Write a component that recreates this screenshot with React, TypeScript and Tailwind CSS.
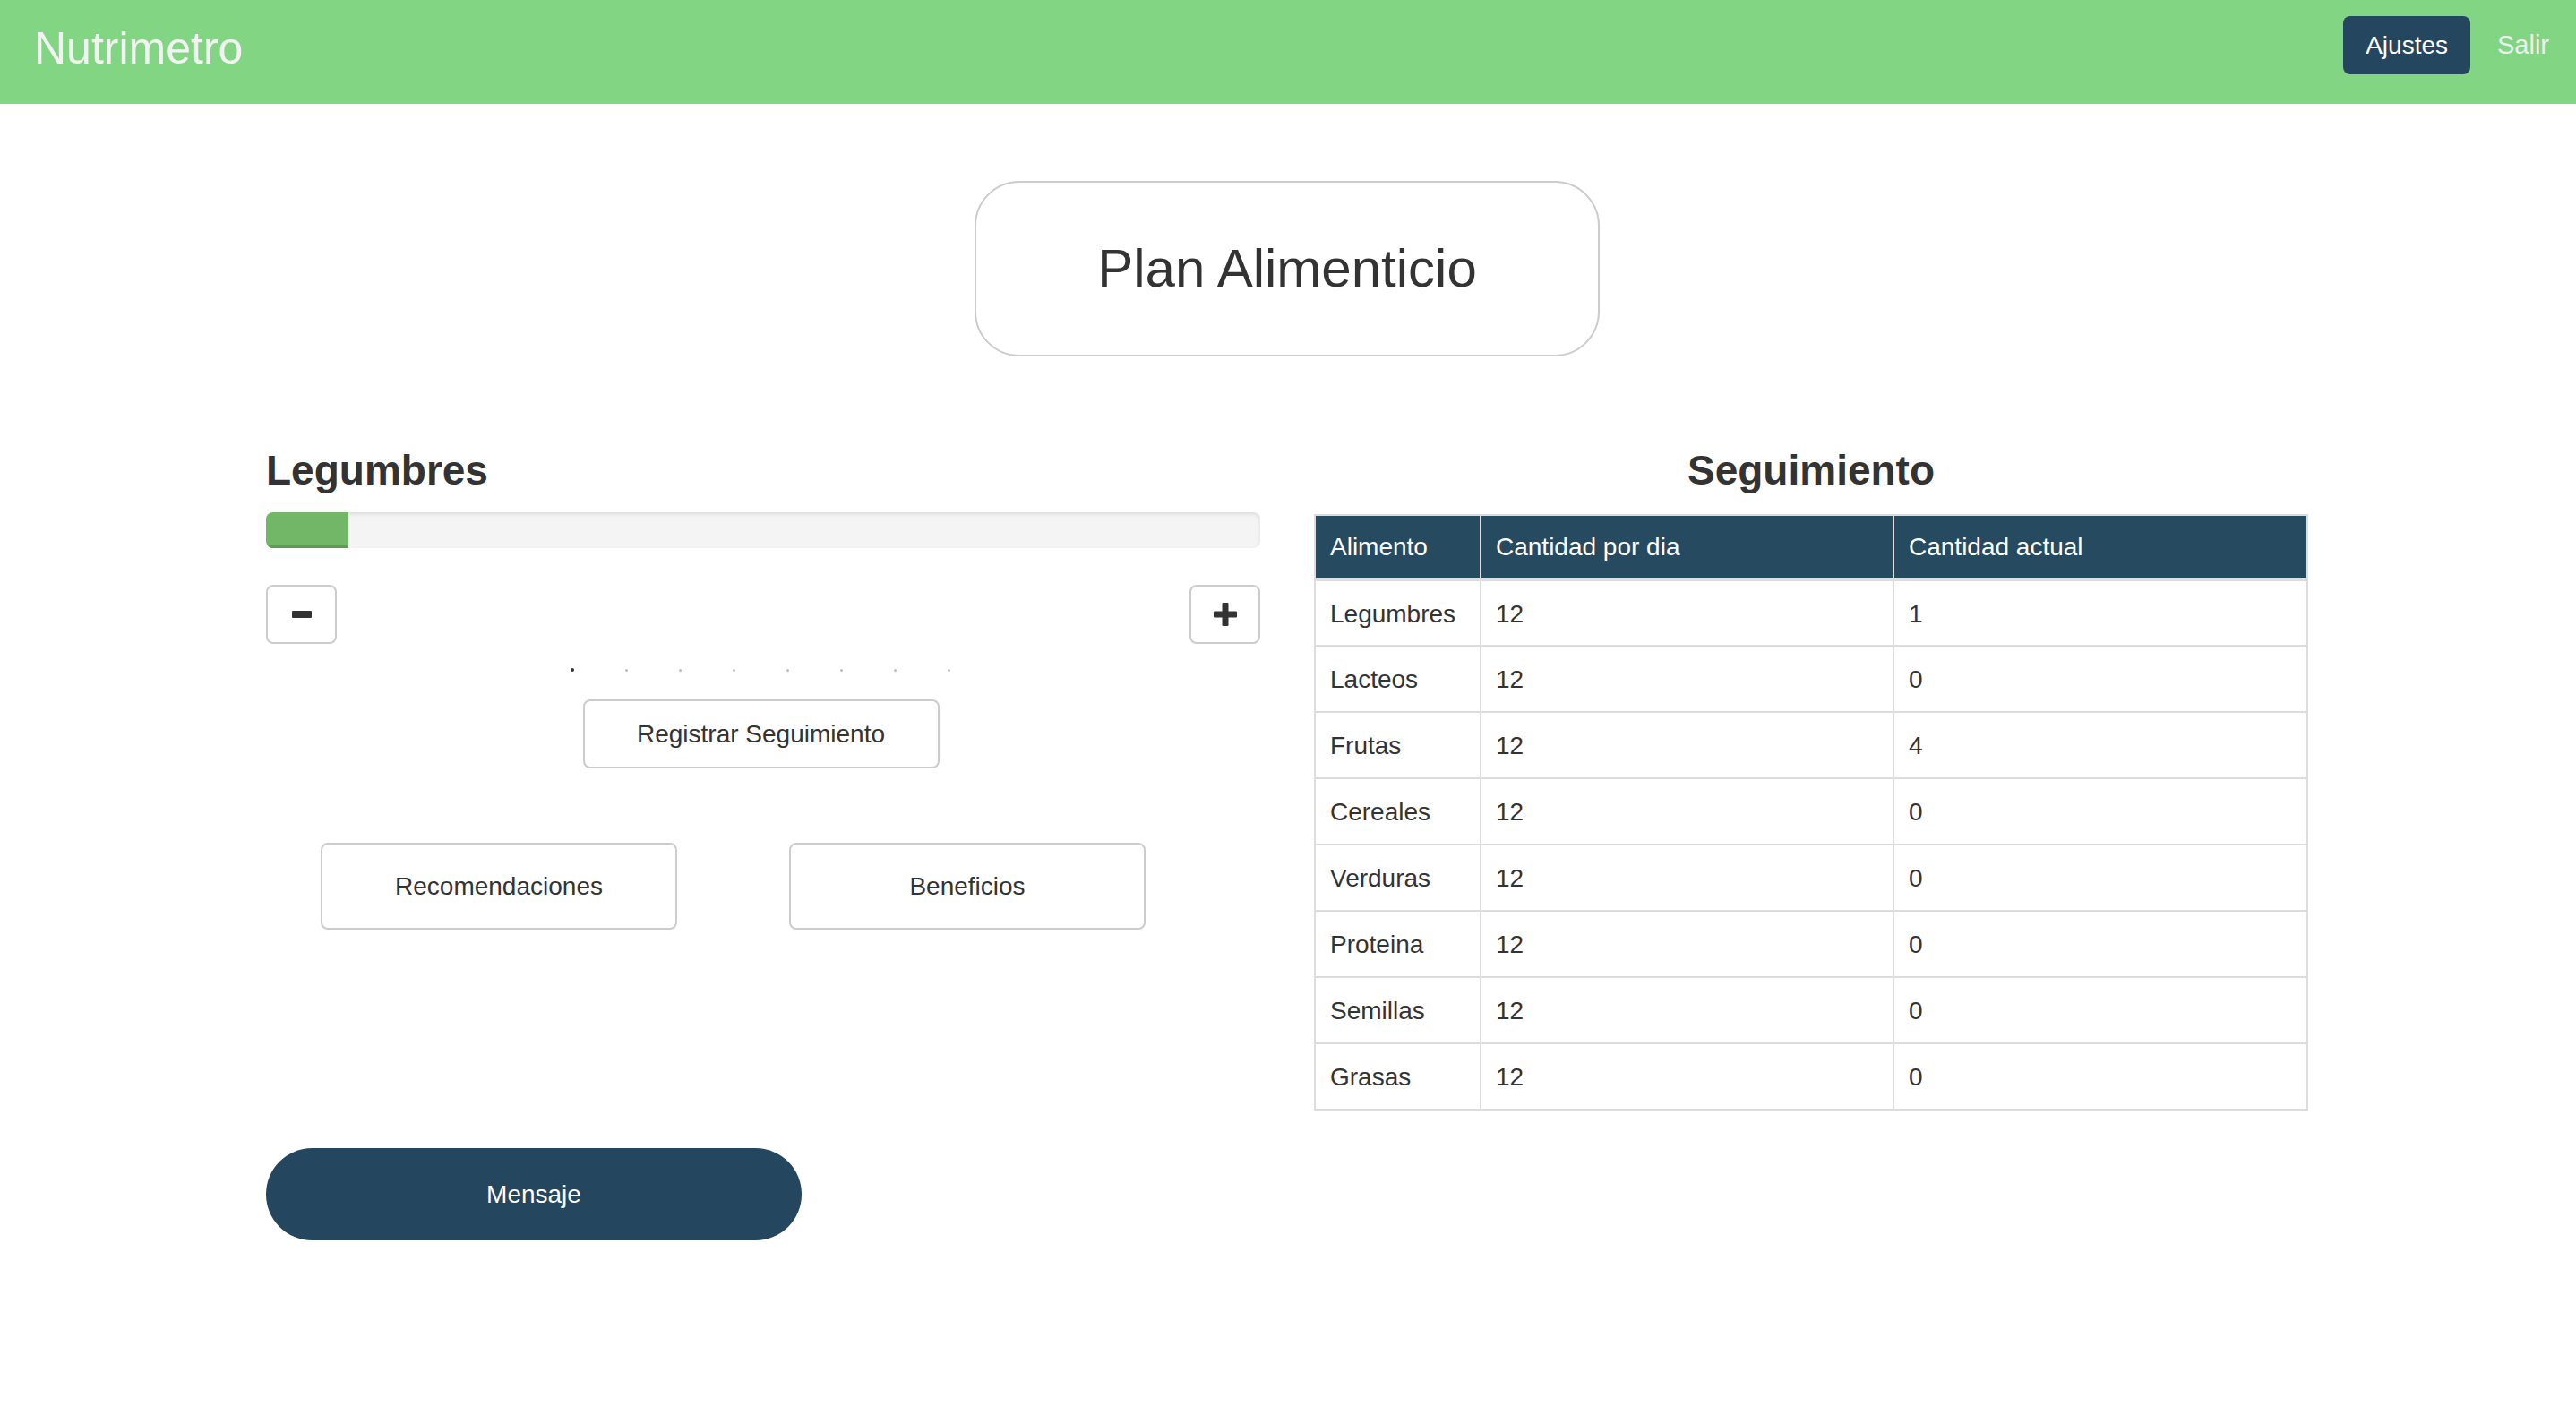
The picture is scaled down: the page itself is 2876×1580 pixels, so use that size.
import React from 'react';

const rows = [
  ['Legumbres', '12', '1'],
  ['Lacteos', '12', '0'],
  ['Frutas', '12', '4'],
  ['Cereales', '12', '0'],
  ['Verduras', '12', '0'],
  ['Proteina', '12', '0'],
  ['Semillas', '12', '0'],
  ['Grasas', '12', '0'],
];

function Navbar() {
  return (
    <nav className="h-[116px] bg-[#81d583] flex items-start justify-between pl-[38px] pr-[30px]">
      <span className="mt-[24px] text-[50px] leading-[60px] text-[#f2f2f2]">Nutrimetro</span>
      <div className="flex items-center gap-[30px] mt-[18px]">
        <button className="h-[65px] px-[25px] bg-[#24465e] rounded-[8px] text-white text-[28px]">
          Ajustes
        </button>
        <span className="text-[29px] text-[#eeeeee]">Salir</span>
      </div>
    </nav>
  );
}

function TrackerColumn() {
  return (
    <div className="flex flex-col">
      <h3 className="mt-[6px] h-[53px] text-[46px] leading-[53px] font-bold">Legumbres</h3>

      {/* barra de progreso */}
      <div className="mt-[20px] h-[40px] rounded-[8px] bg-[#f4f4f4] shadow-[inset_0_2px_4px_rgba(0,0,0,0.1)] overflow-hidden">
        <div className="h-full w-[92px] bg-[#72b667] border-b-[3px] border-[#5e9c54]"></div>
      </div>

      <div className="mt-[41px] flex justify-between">
        <button className="w-[79px] h-[66px] border-2 border-[#cccccc] rounded-[8px] bg-white flex items-center justify-center">
          <svg width="22" height="8" viewBox="0 0 22 8">
            <rect x="0" y="0" width="22" height="8" rx="1" fill="#333" />
          </svg>
        </button>
        <button className="w-[79px] h-[66px] border-2 border-[#cccccc] rounded-[8px] bg-white flex items-center justify-center">
          <svg width="26" height="26" viewBox="0 0 26 26">
            <rect x="9.5" y="0" width="7" height="26" rx="1" fill="#333" />
            <rect x="0" y="9.5" width="26" height="7" rx="1" fill="#333" />
          </svg>
        </button>
      </div>

      {/* indicadores */}
      <div className="mt-[27px] h-[4px] pr-[6px] flex justify-center items-center gap-[57px]">
        <span className="w-[4px] h-[4px] rounded-full bg-[#333]"></span>
        {[0, 1, 2, 3, 4, 5, 6].map((i) => (
          <span key={i} className="w-[3px] h-[3px] rounded-full bg-[#bbbbbb]"></span>
        ))}
      </div>

      <div className="mt-[31px] pr-[5px] flex justify-center">
        <button className="w-[398px] h-[77px] border-2 border-[#cccccc] rounded-[8px] bg-white text-[28px]">
          Registrar Seguimiento
        </button>
      </div>

      <div className="mt-[83px] flex pl-[61px] gap-[125px]">
        <button className="w-[398px] h-[97px] border-2 border-[#cccccc] rounded-[8px] bg-white text-[28px]">
          Recomendaciones
        </button>
        <button className="w-[398px] h-[97px] border-2 border-[#cccccc] rounded-[8px] bg-white text-[28px]">
          Beneficios
        </button>
      </div>

      <button className="mt-[244px] w-[598px] h-[103px] rounded-full bg-[#24465e] text-white text-[28px]">
        Mensaje
      </button>
    </div>
  );
}

function TrackingTable() {
  return (
    <div className="flex flex-col">
      <h3 className="mt-[6px] h-[53px] text-[46px] leading-[53px] font-bold text-center">Seguimiento</h3>
      <table className="mt-[22px] w-full border-collapse border-2 border-[#dddddd] text-[28px]">
        <thead>
          <tr className="h-[72px] bg-[#264a5f] text-white">
            <th className="w-[185px] px-[16px] text-left font-normal border-2 border-[#dddddd] border-b-4">Alimento</th>
            <th className="w-[461px] px-[16px] text-left font-normal border-2 border-[#dddddd] border-b-4">Cantidad por dia</th>
            <th className="px-[16px] text-left font-normal border-2 border-[#dddddd] border-b-4">Cantidad actual</th>
          </tr>
        </thead>
        <tbody>
          {rows.map((r) => (
            <tr key={r[0]} className="h-[74px]">
              <td className="px-[16px] pt-[2px] border-2 border-[#dddddd]">{r[0]}</td>
              <td className="px-[16px] pt-[2px] border-2 border-[#dddddd]">{r[1]}</td>
              <td className="px-[16px] pt-[2px] border-2 border-[#dddddd]">{r[2]}</td>
            </tr>
          ))}
        </tbody>
      </table>
    </div>
  );
}

export default function App() {
  return (
    <div className="min-h-screen bg-white text-[#333] font-['Liberation_Sans',Arial,sans-serif]">
      <Navbar />
      <div className="w-[2340px] ml-[267px] px-[30px]">
        <div className="mt-[86px] mx-auto w-[698px] h-[196px] border-2 border-[#cccccc] rounded-[50px] flex items-center justify-center">
          <h2 className="text-[60px]">Plan Alimenticio</h2>
        </div>
        <div className="mt-[95px] grid grid-cols-2 gap-[60px]">
          <TrackerColumn />
          <TrackingTable />
        </div>
      </div>
    </div>
  );
}
